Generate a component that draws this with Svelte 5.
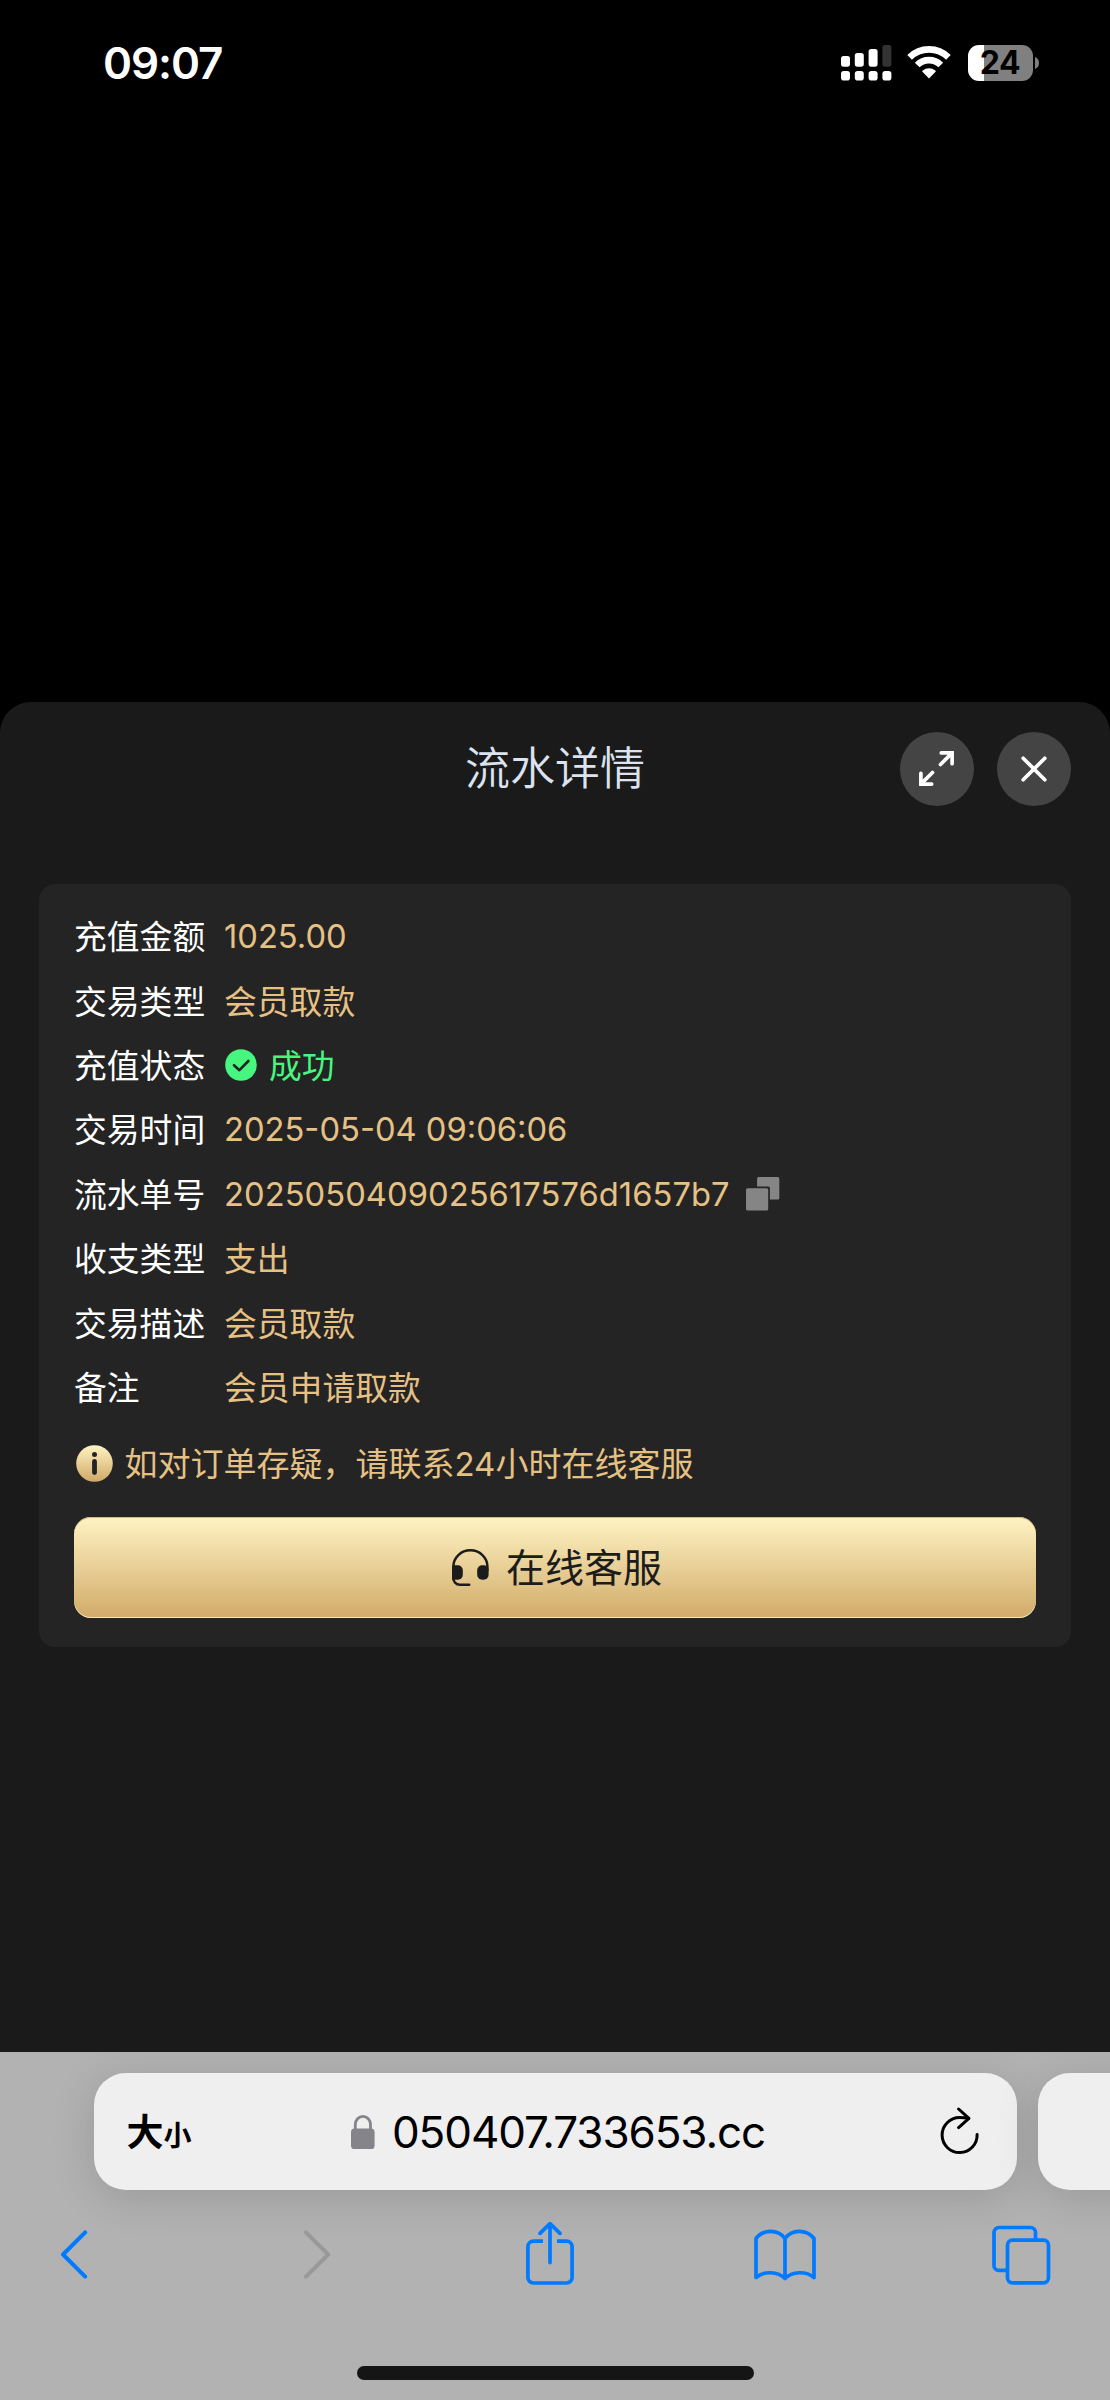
<script>
  const rows = [
    { label: '充值金额', value: '1025.00', latin: true },
    { label: '交易类型', value: '会员取款' },
    { label: '充值状态', value: '成功', status: true },
    { label: '交易时间', value: '2025-05-04 09:06:06', latin: true },
    { label: '流水单号', value: '2025050409025617576d1657b7', latin: true, copy: true },
    { label: '收支类型', value: '支出' },
    { label: '交易描述', value: '会员取款' },
    { label: '备注', value: '会员申请取款' }
  ];
</script>

<div class="screen">
  <header class="status-bar">
    <span class="time">09:07</span>
    <div class="indicators">
      <svg class="signal" width="51" height="36" viewBox="0 0 51 36" fill="#fff">
        <rect x="0" y="11" width="9" height="10.7" rx="2.6" />
        <rect x="13.8" y="8" width="9" height="13.7" rx="2.6" />
        <rect x="27.6" y="4" width="9" height="17.7" rx="2.6" />
        <rect x="41.4" y="0" width="9" height="21.7" rx="2.6" fill="#333" />
        <rect x="0" y="26" width="9" height="9.6" rx="2.8" />
        <rect x="13.8" y="26" width="9" height="9.6" rx="2.8" />
        <rect x="27.6" y="26" width="9" height="9.6" rx="2.8" />
        <rect x="41.4" y="26" width="9" height="9.6" rx="2.8" />
      </svg>
      <svg class="wifi" width="44" height="33" viewBox="0 0 44 33">
        <g fill="none" stroke="#fff" stroke-width="6.6">
          <path d="M2.6 11.3a27.6 27.6 0 0 1 38.8 0" />
          <path d="M10.2 19a16.8 16.8 0 0 1 23.6 0" />
        </g>
        <path d="M22 32.4l-6.6-6.6q-.6-.8.3-1.4a10.5 10.5 0 0 1 12.6 0q.9.6.3 1.4z" fill="#fff" />
      </svg>
      <div class="battery">
        <span class="level">24</span>
        <svg class="nub" width="4" height="12" viewBox="0 0 4 12"><path d="M0 0a6.5 6.5 0 0 1 0 12z" fill="#808080" /></svg>
      </div>
    </div>
  </header>

  <section class="sheet">
    <div class="sheet-head">
      <h1>流水详情</h1>
      <div class="actions">
        <button class="round" aria-label="expand">
          <svg width="35" height="35" viewBox="0 0 35 35" fill="none" stroke="#fff" stroke-width="3.7" stroke-linecap="round">
            <path d="M22.3 1.9H33.1V12.7" />
            <path d="M32.4 2.6L21.5 13.5M13.5 21.5L2.6 32.4" />
            <path d="M1.9 22.3V33.1H12.7" />
          </svg>
        </button>
        <button class="round" aria-label="close">
          <svg width="26" height="26" viewBox="0 0 26 26" stroke="#fff" stroke-width="3.7" stroke-linecap="round">
            <path d="M2.2 2.2l21.6 21.6M23.8 2.2L2.2 23.8" />
          </svg>
        </button>
      </div>
    </div>

    <div class="card">
      <dl>
        {#each rows as row}
          <div class="row">
            <dt>{row.label}</dt>
            <dd class:latin={row.latin} class:ok={row.status}>
              {#if row.status}
                <svg class="check" width="32" height="32" viewBox="0 0 32 32">
                  <circle cx="16" cy="16" r="15.8" fill="#47f67f" />
                  <path d="M9 16.2l5.4 5L23.4 12" fill="none" stroke="#242424" stroke-width="2.6" stroke-linecap="round" stroke-linejoin="round" />
                </svg>
              {/if}
              <span class="value" class:serial={row.copy}>{row.value}</span>
              {#if row.copy}
                <svg class="copy" width="34" height="34" viewBox="0 0 34 34" fill="#858585">
                  <path d="M12.6 0h19.2a1.5 1.5 0 0 1 1.5 1.5V21a1.5 1.5 0 0 1-1.5 1.5h-7.9V11a1.6 1.6 0 0 0-1.6-1.6H11.1V1.5A1.5 1.5 0 0 1 12.6 0z" />
                  <rect x="0" y="11.3" width="22.2" height="22.2" rx="1.5" />
                </svg>
              {/if}
            </dd>
          </div>
        {/each}
      </dl>

      <p class="notice">
        <svg width="37" height="37" viewBox="0 0 37 37">
          <defs>
            <linearGradient id="gold" x1="0" y1="0" x2="0" y2="1">
              <stop offset="0" stop-color="#fff3c3" />
              <stop offset="1" stop-color="#d0a966" />
            </linearGradient>
          </defs>
          <circle cx="18.5" cy="18.5" r="18.3" fill="url(#gold)" />
          <circle cx="18.5" cy="9.4" r="2.5" fill="#242424" />
          <rect x="16.1" y="14" width="4.8" height="16" rx="2.4" fill="#242424" />
        </svg>
        <span>如对订单存疑，请联系<b>24</b>小时在线客服</span>
      </p>

      <button class="service">
        <svg width="37" height="38" viewBox="0 0 37 38">
          <path d="M1.4 21V17.5a17 16.2 0 0 1 34 0V21M1.4 20v9.5a6.3 6.3 0 0 0 6.3 6.3H17.2" fill="none" stroke="#1c1c1c" stroke-width="2.5" stroke-linecap="round" />
          <path d="M.2 16.2h5.6a5 5 0 0 1 5 5v4.6a5 5 0 0 1-5 5h-5.6z" fill="#1c1c1c" />
          <rect x="25.2" y="16.2" width="11.4" height="14.6" rx="5" fill="#1c1c1c" />
        </svg>
        <span>在线客服</span>
      </button>
    </div>
  </section>

  <footer class="browser">
    <div class="tabs">
      <div class="address">
        <span class="aa">大<small>小</small></span>
        <div class="url">
          <svg width="24" height="34" viewBox="0 0 24 34">
            <path d="M4.3 15V9.6a7.6 8.2 0 0 1 15.2 0V15" fill="none" stroke="#85848a" stroke-width="2.8" />
            <rect x="0" y="13.6" width="23.6" height="20.4" rx="3.6" fill="#85848a" />
          </svg>
          <span>050407.733653.cc</span>
        </div>
        <svg class="reload" width="40" height="48" viewBox="0 0 40 48" fill="none" stroke="#000" stroke-width="3" stroke-linecap="round" stroke-linejoin="round">
          <path d="M37.1 27.4A17.5 17.5 0 1 1 19.6 10.6q4.5 0 9 .7" />
          <path d="M18.6 2L28.9 11.4 18.6 20.6" />
        </svg>
      </div>
      <div class="address next"></div>
    </div>

    <nav>
      <svg width="28" height="64" viewBox="0 0 28 64" fill="none" stroke="#007aff" stroke-width="4" stroke-linecap="round" stroke-linejoin="round">
        <path d="M25.2 11.4L3 33.5 25.2 55.6" />
      </svg>
      <svg class="forward" width="28" height="64" viewBox="0 0 28 64" fill="none" stroke="#999" stroke-width="4" stroke-linecap="round" stroke-linejoin="round">
        <path d="M3 11.4L25.2 33.5 3 55.6" />
      </svg>
      <svg class="share" width="48" height="64" viewBox="0 0 48 64" fill="none" stroke="#007aff" stroke-width="3.7">
        <path d="M17 20.2H7.4a5.5 5.5 0 0 0-5.5 5.5v30.8a5.5 5.5 0 0 0 5.5 5.5h33.2a5.5 5.5 0 0 0 5.5-5.5V25.7a5.5 5.5 0 0 0-5.5-5.5H31" />
        <path d="M24 41.6V3.4M14 12.4L24 2.6l10 9.8" stroke-linecap="round" stroke-linejoin="round" />
      </svg>
      <svg class="book" width="62" height="64" viewBox="0 0 62 64" fill="none" stroke="#007aff" stroke-width="3.7" stroke-linejoin="round">
        <path d="M31 17.5C24 8 9.5 8 2 17.5V56.5C9.5 50 24 50 31 57.5C38 50 52.5 50 60 56.5V17.5C52.5 8 38 8 31 17.5V57.5" />
      </svg>
      <svg width="59" height="64" viewBox="0 0 59 64" fill="none" stroke="#007aff" stroke-width="3.7">
        <path d="M14.5 49.4H7a5 5 0 0 1-5-5V11.5a5 5 0 0 1 5-5H38.5a5 5 0 0 1 5 5V19" />
        <rect x="15.5" y="19.2" width="41" height="42.6" rx="5" />
      </svg>
    </nav>
    <div class="home"></div>
  </footer>
</div>

<style>
  :global(body) {
    margin: 0;
    background: #000;
  }
  .screen {
    width: 1110px;
    height: 2400px;
    display: flex;
    flex-direction: column;
    overflow: hidden;
    background: #000;
    font-family: 'Inter', 'Noto Sans CJK SC', sans-serif;
  }
  h1, p, dl, dt, dd {
    margin: 0;
    font-weight: 400;
  }
  svg {
    display: block;
    flex: none;
  }
  button {
    border: 0;
    padding: 0;
    font: inherit;
  }
  .status-bar {
    box-sizing: border-box;
    height: 702px;
    padding: 35px 71px 0 103px;
    display: flex;
    justify-content: space-between;
    align-items: flex-start;
  }
  .time {
    color: #fff;
    font-size: 44px;
    line-height: 56px;
    font-weight: 600;
    letter-spacing: -1.1px;
  }
  .indicators {
    display: flex;
    align-items: center;
    padding-top: 10px;
  }
  .wifi {
    margin-left: 15.5px;
    margin-bottom: 1px;
  }
  .battery {
    margin-left: 16.5px;
    display: flex;
    align-items: center;
    gap: 2.5px;
  }
  .level {
    width: 65px;
    height: 36px;
    border-radius: 11px;
    background: linear-gradient(90deg, #fff 16px, #808080 16px);
    color: #000;
    font-size: 32px;
    line-height: 36px;
    font-weight: 650;
    letter-spacing: -0.5px;
    text-align: center;
  }
  .sheet {
    box-sizing: border-box;
    height: 1350px;
    padding: 0 39px;
    background: #1a1a1a;
    border-radius: 31px 31px 0 0;
  }
  .sheet-head {
    height: 182px;
    display: grid;
    grid-template-columns: 1fr auto 1fr;
  }
  h1 {
    grid-column: 2;
    margin-top: 31px;
    color: #dce3ee;
    font-family: 'Noto Sans CJK SC', sans-serif;
    font-size: 45px;
    line-height: 66px;
    font-weight: 350;
  }
  .actions {
    display: flex;
    justify-content: flex-end;
    gap: 23.5px;
    padding-top: 30px;
  }
  .round {
    width: 74px;
    height: 74px;
    border-radius: 50%;
    background: #444;
    display: flex;
    align-items: center;
    justify-content: center;
  }
  .round svg {
    margin: 0 1px 1px 0;
  }
  .card {
    box-sizing: border-box;
    height: 763px;
    padding: 20px 35px 0;
    border-radius: 16px;
    background: #242424;
  }
  .row {
    height: 64.4px;
    display: flex;
    align-items: center;
    font-family: 'Noto Sans CJK SC', sans-serif;
    font-size: 32.8px;
  }
  dt {
    width: 150px;
    padding-bottom: 3px;
    color: #fff;
  }
  dd {
    display: flex;
    align-items: center;
    color: #e6c184;
  }
  .value {
    padding-bottom: 3px;
  }
  .latin {
    font-family: 'Inter', sans-serif;
    font-size: 32.7px;
  }
  .latin .value {
    padding-bottom: 0;
  }
  .value.serial {
    letter-spacing: 0.05px;
  }
  .ok {
    color: #47f67f;
    gap: 12px;
  }
  .check {
    margin-left: 1px;
  }
  .copy {
    margin-left: 16.5px;
  }
  .notice {
    display: flex;
    align-items: center;
    gap: 12px;
    height: 60px;
    padding-left: 1.5px;
    margin-top: 14.5px;
    color: #e6c184;
    font-family: 'Noto Sans CJK SC', sans-serif;
    font-size: 33px;
  }
  .notice span {
    padding-bottom: 3px;
  }
  b {
    font-family: 'Inter', sans-serif;
    font-weight: 400;
  }
  .service {
    box-sizing: border-box;
    width: 100%;
    height: 101px;
    margin-top: 23.5px;
    padding-left: 4px;
    border-radius: 17px;
    background: linear-gradient(#fff3c3, #d1ab69);
    box-shadow: inset 0 1px #cdb98a, inset 0 -1px #f8e6b4;
    color: #1c1c1c;
    display: flex;
    align-items: center;
    justify-content: center;
    gap: 17px;
    font-family: 'Noto Sans CJK SC', sans-serif;
    font-size: 39px;
  }
  .service span {
    padding-bottom: 5px;
  }
  .browser {
    height: 348px;
    display: flex;
    flex-direction: column;
    align-items: center;
    overflow: hidden;
    background: #b2b2b2;
  }
  .tabs {
    box-sizing: border-box;
    width: 100%;
    padding: 20.5px 0 0 93.5px;
    display: flex;
    gap: 21px;
  }
  .address {
    box-sizing: border-box;
    flex: none;
    width: 923px;
    height: 117px;
    border-radius: 32px;
    background: #efefef;
    box-shadow: 0 8px 44px rgba(0, 0, 0, 0.14);
    display: grid;
    grid-template-columns: 1fr auto 1fr;
    align-items: center;
    padding: 0 37px 0 33px;
  }
  .aa {
    padding-top: 1px;
    font-family: 'Noto Sans CJK SC', sans-serif;
    font-size: 37px;
    line-height: 50px;
    font-weight: 700;
    color: #000;
  }
  small {
    font-size: 28px;
  }
  .url {
    display: flex;
    align-items: center;
    gap: 17px;
    margin-left: 10px;
    padding-top: 1px;
    color: #000;
    font-size: 44px;
    letter-spacing: -1.1px;
  }
  .reload {
    justify-self: end;
  }
  nav {
    box-sizing: border-box;
    width: 100%;
    height: 64px;
    margin-top: 31.5px;
    padding: 0 57.5px 0 43px;
    display: grid;
    grid-template-columns: repeat(5, 62px);
    justify-content: space-between;
    justify-items: center;
  }
  /* optical centring of the middle icons */
  .forward {
    margin-left: 13px;
  }
  .share {
    margin-left: 4px;
  }
  .book {
    margin-left: 1px;
  }
  .home {
    width: 397px;
    height: 13.5px;
    border-radius: 7px;
    background: #151515;
    margin-top: 81px;
  }
</style>
